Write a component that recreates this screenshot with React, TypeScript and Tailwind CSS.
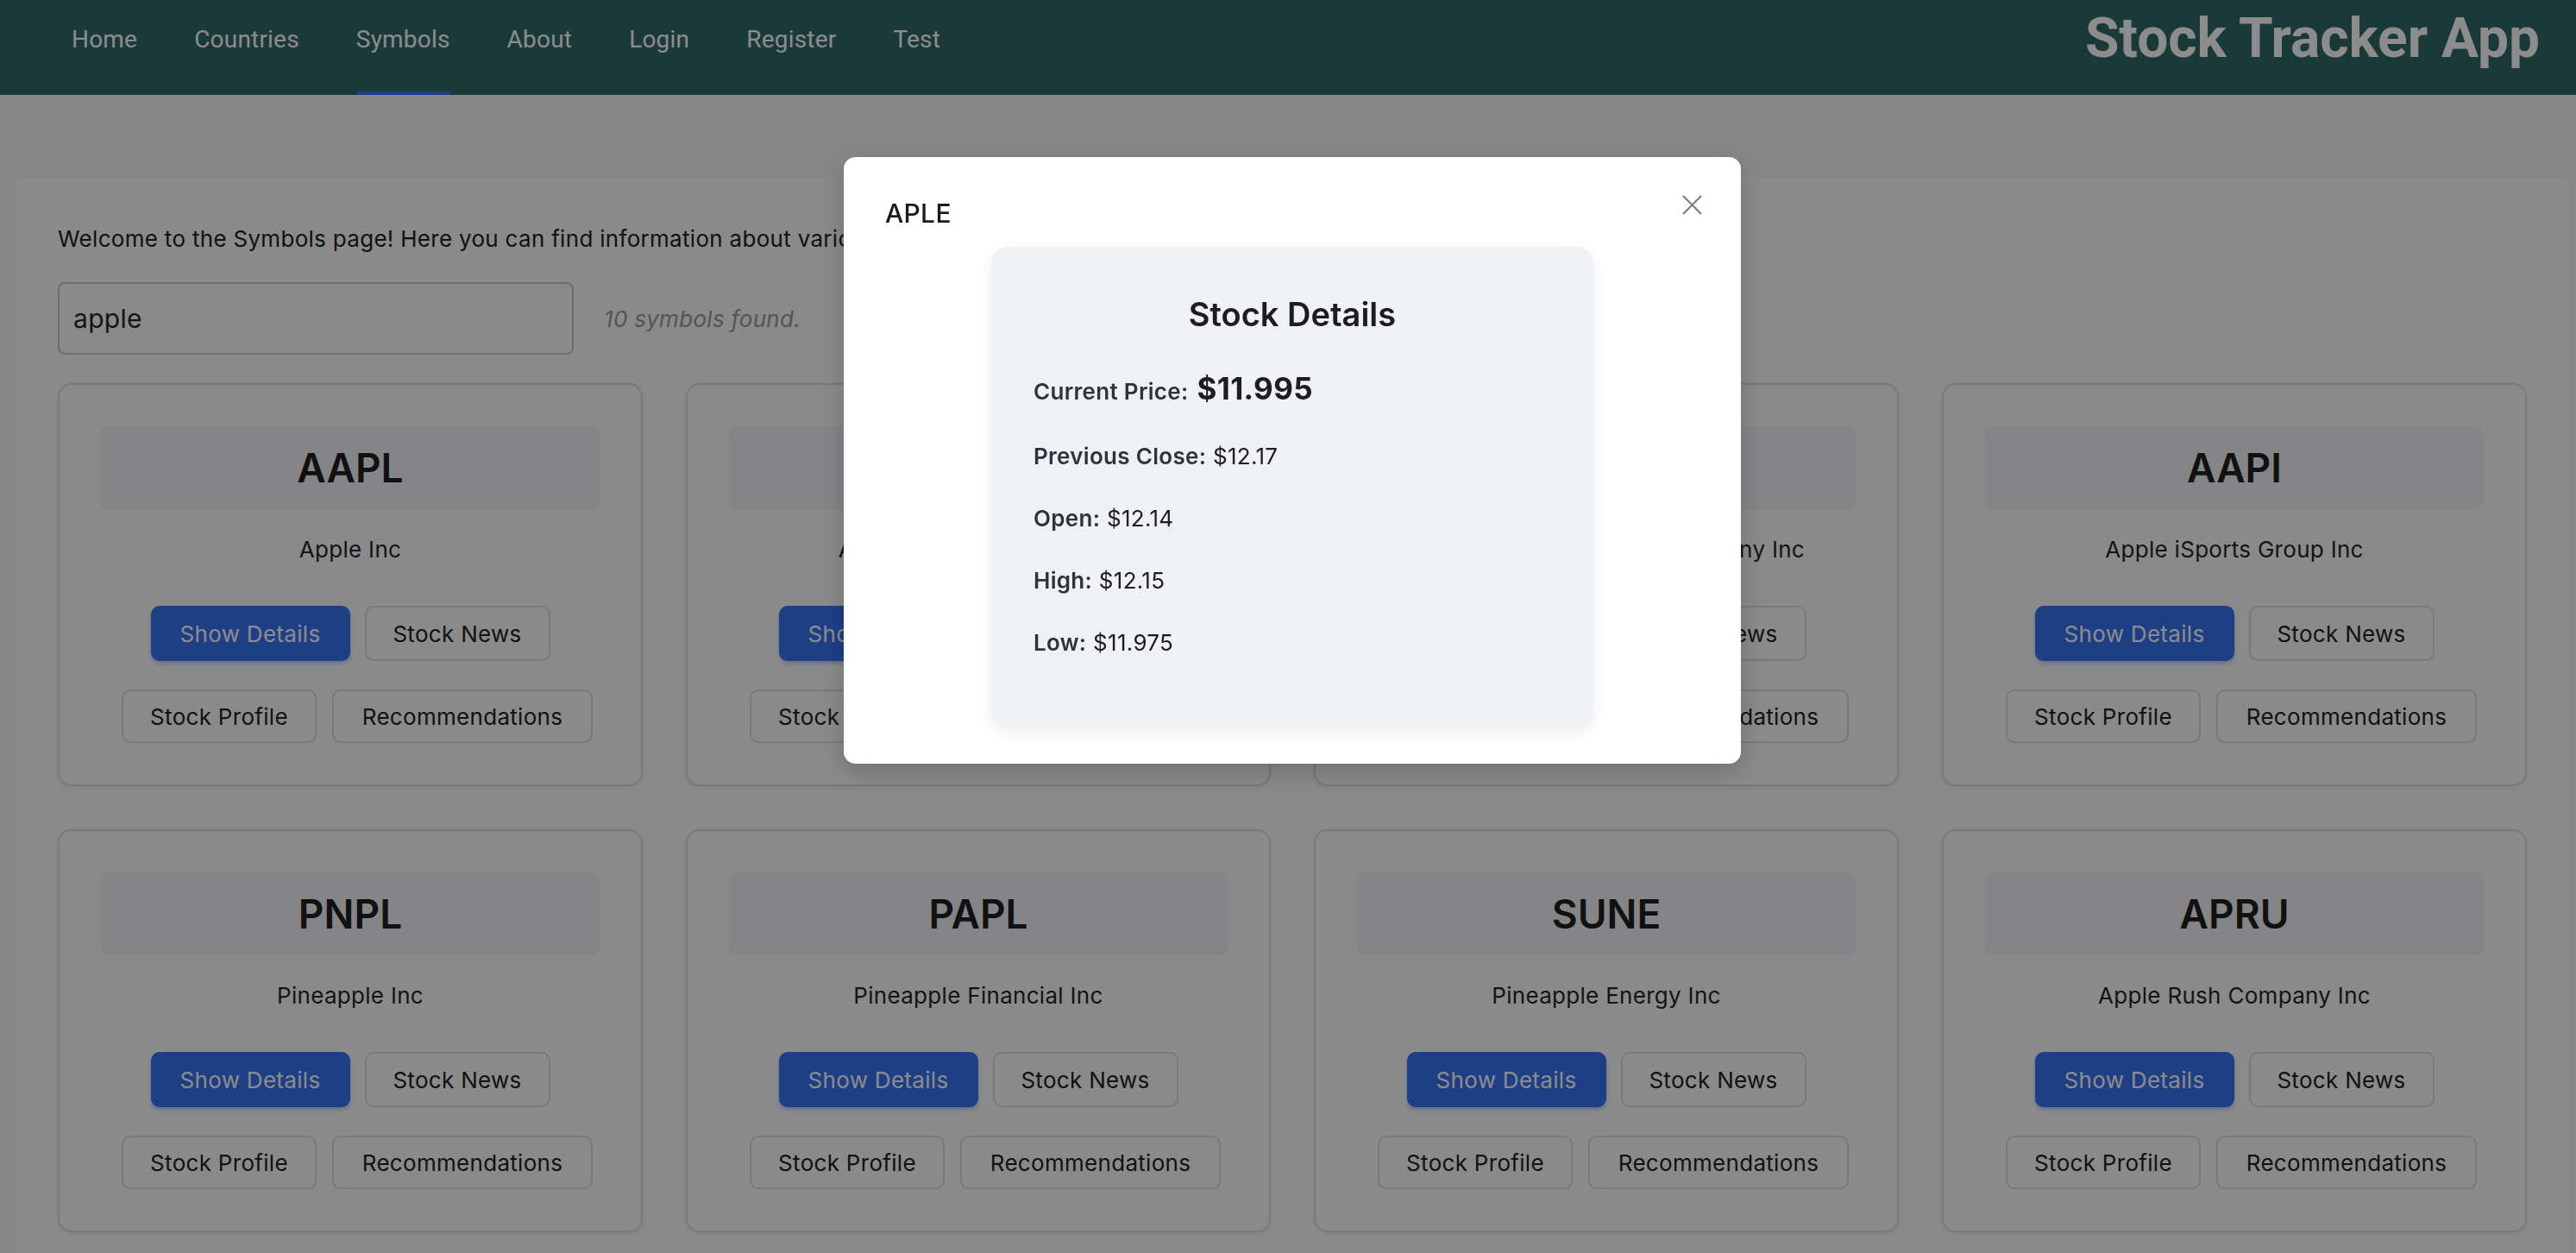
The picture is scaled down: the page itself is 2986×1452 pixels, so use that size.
import React from 'react';

const navLinks = ['Home', 'Countries', 'Symbols', 'About', 'Login', 'Register', 'Test'];

const symbols = [
  { code: 'AAPL', name: 'Apple Inc' },
  { code: 'APLE', name: 'Apple Hospitality REIT Inc' },
  { code: 'MLP', name: 'Maui Land & Pineapple Company Inc' },
  { code: 'AAPI', name: 'Apple iSports Group Inc' },
  { code: 'PNPL', name: 'Pineapple Inc' },
  { code: 'PAPL', name: 'Pineapple Financial Inc' },
  { code: 'SUNE', name: 'Pineapple Energy Inc' },
  { code: 'APRU', name: 'Apple Rush Company Inc' },
  { code: 'APPF', name: 'AppFolio Inc' },
  { code: 'GAPL', name: 'Golden Apple Oil & Gas Inc' },
];

function SymbolCard({ code, name }: { code: string; name: string }) {
  return (
    <div className="rounded-[16px] border-2 border-[#dcdcdc] px-[47px] pt-[48px] pb-[48px] shadow-[0_2px_6px_rgba(0,0,0,0.08)]">
      <div className="flex h-[96px] items-center justify-center rounded-[10px] bg-[#f2f2f8]">
        <span className="text-[46px] font-semibold tracking-normal text-[#1f1f1f]">{code}</span>
      </div>
      <div className="mt-[27px] text-center text-[26px] leading-[39px] text-[#262626]">{name}</div>
      <div className="mt-[46px] flex justify-center gap-[17px]">
        <button className="flex h-[64px] w-[231px] items-center justify-center rounded-[10px] border-2 border-[#3873f5] bg-[#3873f5] text-[26px] text-white shadow-[0_3px_4px_rgba(56,115,245,0.35)]">
          Show Details
        </button>
        <button className="flex h-[64px] w-[215px] items-center justify-center rounded-[10px] border-2 border-[#dcdcdc] text-[26px] text-[#222]">
          Stock News
        </button>
      </div>
      <div className="mt-[33px] ml-[16px] flex justify-center gap-[18px]">
        <button className="flex h-[62px] w-[226px] items-center justify-center rounded-[10px] border-2 border-[#dcdcdc] text-[26px] text-[#222]">
          Stock Profile
        </button>
        <button className="flex h-[62px] w-[302px] items-center justify-center rounded-[10px] border-2 border-[#dcdcdc] text-[26px] text-[#222]">
          Recommendations
        </button>
      </div>
    </div>
  );
}

function DetailsModal() {
  return (
    <div className="fixed inset-0 flex items-start justify-center bg-black/45">
      <div className="mt-[182px] ml-[10px] w-[1040px] rounded-[14px] bg-white pt-[45px] pb-[42px] shadow-[0_10px_30px_rgba(0,0,0,0.2)]">
        <div className="flex items-start justify-between pl-[48px] pr-[45px]">
          <h5 className="text-[30px] leading-[40px] font-medium text-[#1a1a1a]">APLE</h5>
          <button className="-mt-px h-[23px] w-[23px] text-[#7a7a7a]">
            <svg viewBox="0 0 23 23" className="h-[23px] w-[23px]" fill="none" stroke="currentColor" strokeWidth="2">
              <path d="M1 1L22 22M22 1L1 22" />
            </svg>
          </button>
        </div>
        <div className="mx-auto mt-[19px] w-[698px] rounded-[20px] bg-[#f0f1f5] px-[49px] pt-[55px] pb-[79px] shadow-[0_6px_18px_rgba(0,0,0,0.07)]">
          <h2 className="text-center text-[38px] leading-[46px] font-semibold tracking-normal text-[#1c1c22]">Stock Details</h2>
          <div className="mt-[40px] flex items-baseline gap-[10px] leading-[46px]">
            <span className="text-[26px] font-semibold text-[#2f333b]">Current Price:</span>
            <span className="text-[35px] font-bold text-[#1d1d22]">$11.995</span>
          </div>
          <div className="mt-[32px] space-y-[33px] text-[26px] leading-[39px] text-[#1d1d22]">
            <p>
              <span className="font-semibold text-[#2f333b]">Previous Close:</span> $12.17
            </p>
            <p>
              <span className="font-semibold text-[#2f333b]">Open:</span> $12.14
            </p>
            <p>
              <span className="font-semibold text-[#2f333b]">High:</span> $12.15
            </p>
            <p>
              <span className="font-semibold text-[#2f333b]">Low:</span> $11.975
            </p>
          </div>
        </div>
      </div>
    </div>
  );
}

export default function App() {
  return (
    <div className="relative h-[1452px] overflow-hidden bg-[#f5f5f5] font-['Inter','Noto_Sans',sans-serif] tracking-[0.3px]">
      <nav className="flex h-[110px] items-start justify-between bg-[#316a6a] pl-[50px] pr-[42px] font-['Roboto',sans-serif] tracking-normal">
        <ul className="flex h-full">
          {navLinks.map((link) => (
            <li key={link} className="flex h-full flex-col justify-between px-[33px]">
              <a className="pt-[26px] text-[28px] leading-[40px] tracking-[0.2px] text-white">{link}</a>
              <div className={link === 'Symbols' ? 'h-[4px] bg-[#3873f5]' : 'h-[4px]'} />
            </li>
          ))}
        </ul>
        <h1 className="mt-[13px] text-[64px] leading-[64px] font-bold text-white">Stock Tracker App</h1>
      </nav>

      <main className="pt-[96px] pl-[18px]">
        <div className="w-[2960px] bg-[#fcfcfc] px-[49px] pt-[51px] pb-[49px]">
          <p className="text-[26px] leading-[39px] whitespace-nowrap text-[#222]">
            Welcome to the Symbols page! Here you can find information about various stock symbols. Search by name or
            symbol below.
          </p>
          <div className="mt-[31px] flex items-center">
            <input
              className="h-[84px] w-[598px] rounded-[8px] border-2 border-[#c8c8c8] bg-transparent pl-[16px] text-[30px] text-[#262626] outline-none"
              defaultValue="apple"
            />
            <span className="ml-[35px] text-[26px] italic text-[#9a9a9a]">10 symbols found.</span>
          </div>
          <div className="mt-[33px] grid grid-cols-4 gap-[50px]">
            {symbols.map((s) => (
              <SymbolCard key={s.code} code={s.code} name={s.name} />
            ))}
          </div>
        </div>
      </main>

      <DetailsModal />
    </div>
  );
}
